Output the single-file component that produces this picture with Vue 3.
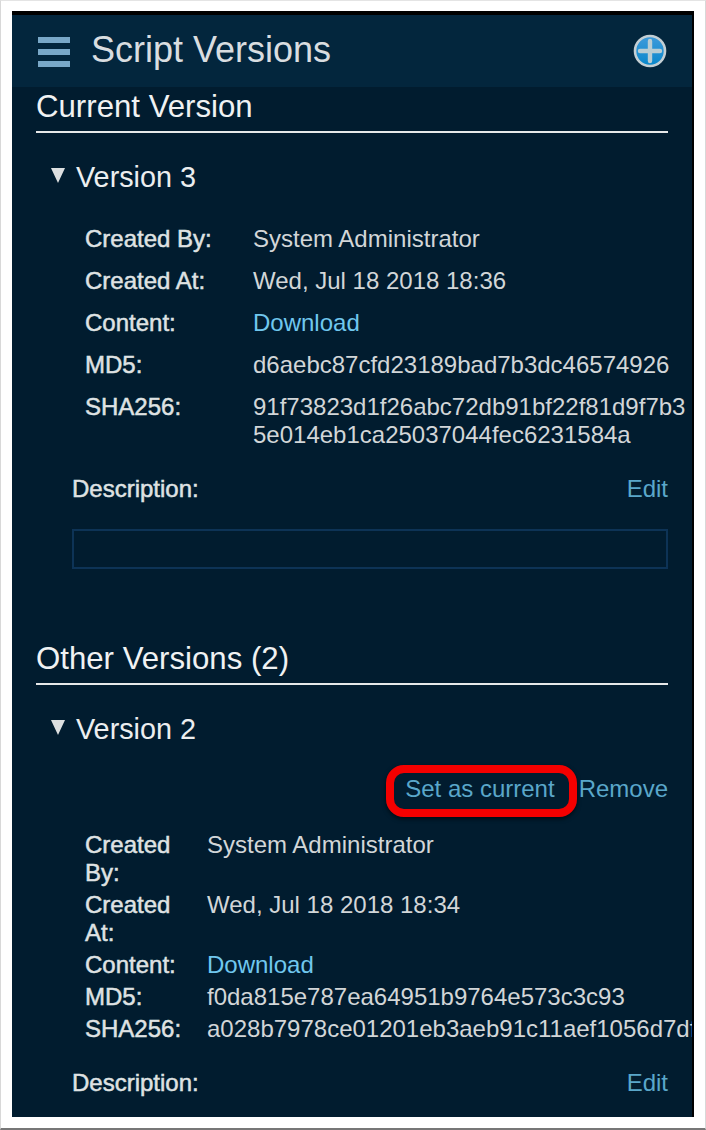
<script setup>
const v3 = [
  { k: 'Created By:', v: 'System Administrator' },
  { k: 'Created At:', v: 'Wed, Jul 18 2018 18:36' },
  { k: 'Content:', v: 'Download', link: true },
  { k: 'MD5:', v: 'd6aebc87cfd23189bad7b3dc46574926' },
  { k: 'SHA256:', v: '91f73823d1f26abc72db91bf22f81d9f7b35e014eb1ca25037044fec6231584a' },
]
const v2 = [
  { k: 'Created By:', v: 'System Administrator' },
  { k: 'Created At:', v: 'Wed, Jul 18 2018 18:34' },
  { k: 'Content:', v: 'Download', link: true },
  { k: 'MD5:', v: 'f0da815e787ea64951b9764e573c3c93' },
  { k: 'SHA256:', v: 'a028b7978ce01201eb3aeb91c11aef1056d7dfa3c41' },
]
</script>

<template>
  <div class="page">
    <div class="window">
      <header class="bar">
        <div class="burger"><i></i><i></i><i></i></div>
        <h1>Script Versions</h1>
        <svg class="plus" width="34" height="34" viewBox="0 0 34 34">
          <defs>
            <linearGradient id="pg" x1="0" y1="0" x2="0" y2="1">
              <stop offset="0" stop-color="#3f9bdb" />
              <stop offset="1" stop-color="#0887cb" />
            </linearGradient>
          </defs>
          <circle cx="17" cy="17" r="15" fill="url(#pg)" stroke="#c4cfd4" stroke-width="2.6" />
          <path d="M17 7v20M7 17h20" stroke="#b9cdd3" stroke-width="4.4" stroke-linecap="round" />
        </svg>
      </header>
      <main class="content">
        <section class="current">
          <h2>Current Version</h2>
          <div class="ver"><span class="tri"></span>Version 3</div>
          <div class="table t1">
            <template v-for="r in v3" :key="r.k">
              <div class="k">{{ r.k }}</div>
              <div class="v" :class="{ link: r.link }">{{ r.v }}</div>
            </template>
          </div>
          <div class="desc"><span class="k">Description:</span><a>Edit</a></div>
          <div class="box"></div>
        </section>
        <section class="other">
          <h2>Other Versions (2)</h2>
          <div class="ver"><span class="tri"></span>Version 2</div>
          <div class="actions">
            <a class="set">Set as current<span class="mark"></span></a>
            <a>Remove</a>
          </div>
          <div class="table t2">
            <template v-for="r in v2" :key="r.k">
              <div class="k">{{ r.k }}</div>
              <div class="v" :class="{ link: r.link }">{{ r.v }}</div>
            </template>
          </div>
          <div class="desc d2"><span class="k">Description:</span><a>Edit</a></div>
        </section>
      </main>
    </div>
  </div>
</template>

<style>
html, body { margin: 0; background: #fff; }
</style>

<style scoped>
.page {
  width: 706px;
  height: 1130px;
  box-sizing: border-box;
  background: #fff;
  border: 1px solid #d8d8d8;
  border-bottom: 2px solid #777;
  border-top-color: #e4e4e4;
  padding: 10px 11px 11px 11px;
  font-family: "Liberation Sans", Arial, sans-serif;
  overflow: hidden;
}
.window {
  width: 682px;
  height: 1106px;
  box-sizing: border-box;
  border-top: 4px solid #000;
  border-right: 2px solid #000;
  background: #011c2f;
  overflow: hidden;
  display: flex;
  flex-direction: column;
}
.bar {
  height: 72px;
  flex: none;
  background: #03263d;
  display: flex;
  align-items: center;
  padding: 0 24px 0 26px;
}
.burger {
  width: 32px;
  display: flex;
  flex-direction: column;
  gap: 5.5px;
  margin-top: 2px;
}
.burger i { display: block; height: 6.3px; background: #79a8c8; }
.bar h1 {
  margin: -2px 0 0 21px;
  flex: 1;
  font-size: 36px;
  font-weight: 400;
  color: #d9dde0;
}
.plus { margin-right: 1px; }
.content {
  flex: 1;
  padding: 0 24px 0 24px;
  overflow: hidden;
}
h2 {
  margin: 0;
  font-size: 31.2px;
  font-weight: 400;
  line-height: 40px;
  color: #f0f2f3;
  border-bottom: 2px solid #e6e8e9;
  padding-bottom: 4px;
}
.ver {
  display: flex;
  align-items: center;
  margin: 26px 0 0 15px;
  height: 36px;
  font-size: 28.8px;
  color: #eceeef;
}
.tri {
  width: 0; height: 0;
  margin-right: 11px;
  margin-top: -4px;
  border-left: 7.5px solid transparent;
  border-right: 7.5px solid transparent;
  border-top: 15px solid #dcdfe0;
}
.table {
  display: grid;
  margin-left: 49px;
  font-size: 24px;
  line-height: 28px;
}
.t1 {
  grid-template-columns: 168px 436px;
  margin-top: 30px;
  row-gap: 14px;
}
.t2 {
  grid-template-columns: 122px 520px;
  margin-top: 28px;
  row-gap: 4px;
}
.k {
  color: #dfe2e3;
  font-weight: 400;
  -webkit-text-stroke: 0.5px #dfe2e3;
  font-size: 24px;
}
.v { color: #d2d6d8; word-break: break-all; }
.t2 .k { width: 100px; }
.t2 .v:last-child { white-space: nowrap; word-break: normal; }
.link { color: #70c7ee; }
a { color: #5aa7ca; font-size: 24px; }
.desc {
  display: flex;
  justify-content: space-between;
  align-items: center;
  margin: 26px 0 0 36px;
  height: 28px;
  line-height: 28px;
}
.box {
  margin: 26px 0 0 36px;
  height: 40px;
  box-sizing: border-box;
  border: 2px solid #0d3356;
}
.other { margin-top: 70px; }
.actions {
  display: flex;
  justify-content: flex-end;
  gap: 24px;
  margin-top: 28px;
  line-height: 28px;
}
.set { position: relative; }
.mark {
  position: absolute;
  left: -19px;
  right: -22px;
  top: -10px;
  bottom: -14px;
  border: 8px solid #f40000;
  border-radius: 18px;
  box-shadow: 0 2px 4px rgba(0,0,0,.6);
}
.d2 { margin-top: 26px; }
</style>
